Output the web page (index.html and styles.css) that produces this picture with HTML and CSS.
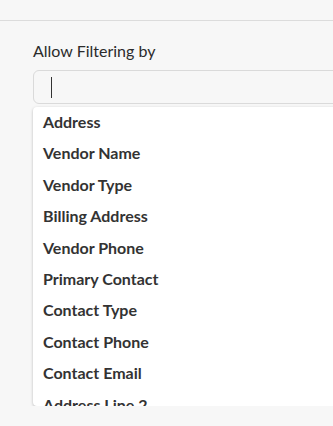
FILE: index.html
```html
<!DOCTYPE html>
<html>
<head>
<meta charset="utf-8">
<link rel="stylesheet" href="styles.css">
</head>
<body>
<div class="topbar"></div>
<div class="content">
  <label class="label">Allow Filtering by</label>
  <div class="input"><span class="caret"></span></div>
  <ul class="menu">
    <li>Address</li>
    <li>Vendor Name</li>
    <li>Vendor Type</li>
    <li>Billing Address</li>
    <li>Vendor Phone</li>
    <li>Primary Contact</li>
    <li>Contact Type</li>
    <li>Contact Phone</li>
    <li>Contact Email</li>
    <li>Address Line 2</li>
  </ul>
</div>
</body>
</html>
```

FILE: styles.css
```css
html, body {
  margin: 0;
  padding: 0;
  background: #f7f7f7;
  font-family: Lato, "Open Sans", sans-serif;
  color: #333;
  overflow: hidden;
  height: 426px;
}
.topbar {
  height: 20px;
  border-bottom: 1px solid #dcdcdc;
}
.content {
  padding: 21px 0 0 33px;
  display: flex;
  flex-direction: column;
  overflow: hidden;
}
.label {
  font-size: 16px;
  line-height: 18px;
  color: #2b2b2b;
  margin-bottom: 10px;
}
.input {
  height: 34px;
  width: 320px;
  box-sizing: border-box;
  border: 1px solid #dadada;
  border-radius: 6px;
  background: #f7f7f7;
  display: flex;
  align-items: center;
  padding-left: 17px;
  flex-shrink: 0;
}
.caret {
  width: 1px;
  height: 21px;
  background: #333;
}
.menu {
  list-style: none;
  margin: 3px 0 0 0;
  padding: 0;
  width: 320px;
  height: 299px;
  overflow: hidden;
  background: #fff;
  border-radius: 4px;
  box-shadow: 0 1px 3px rgba(0,0,0,0.25);
  flex-shrink: 0;
}
.menu li {
  font-weight: 700;
  font-size: 16px;
  height: 31.4px;
  line-height: 29.4px;
  padding-left: 10px;
  color: #333;
}
```
